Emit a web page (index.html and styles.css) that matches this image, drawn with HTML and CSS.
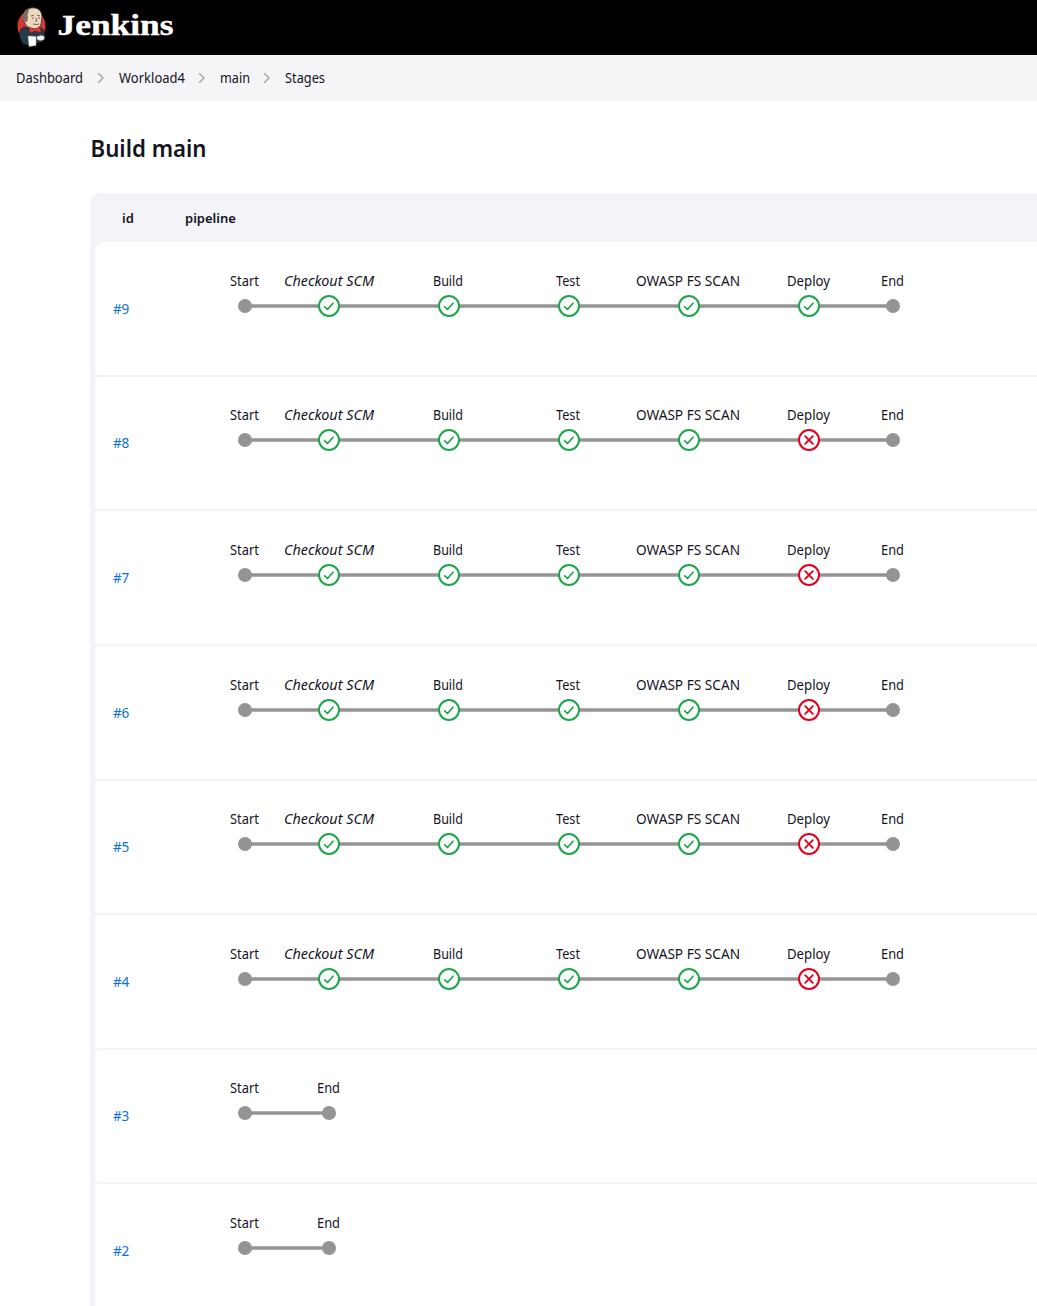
FILE: index.html
```
<!DOCTYPE html>
<html lang="en">
<head>
<meta charset="utf-8">
<title>Build main - Stages</title>
<link rel="stylesheet" href="styles.css">
</head>
<body>
<svg class="defs" aria-hidden="true">
  <defs>
    <g id="dot"><circle r="7" fill="#949494"/></g>
    <g id="ok"><circle r="10" fill="#fff" stroke="#1ea64b" stroke-width="2"/><path d="M-4.300 .8l2.800 2.700 5.500-6.300" fill="none" stroke="#1ea64b" stroke-width="1.700" stroke-linecap="round" stroke-linejoin="round"/></g>
    <g id="bad"><circle r="10" fill="#fff" stroke="#e6001f" stroke-width="2"/><path d="M-3.8-3.8l7.6 7.6M3.8-3.8l-7.6 7.6" fill="none" stroke="#e6001f" stroke-width="1.9" stroke-linecap="round"/></g>
    <g id="run"><path class="line" d="M60 64H708"/><use href="#dot" x="60" y="64"/><use href="#ok" x="144" y="64"/><use href="#ok" x="264" y="64"/><use href="#ok" x="384" y="64"/><use href="#ok" x="504" y="64"/><use href="#dot" x="708" y="64"/></g>
    <g id="empty"><path class="line" d="M60 64H144"/><use href="#dot" x="60" y="64"/><use href="#dot" x="144" y="64"/></g>
  </defs>
</svg>
<header class="header">
  <svg class="logo" width="180" height="55" viewBox="0 0 180 55">
    <ellipse cx="31.500" cy="26" rx="14" ry="15.500" fill="#d33833"/>
    <path d="M20 38c-1-5 0-9 4-11l6 2 8-2c5 1 7 4 7 9l-3 6-14 3-5-1z" fill="#26394a" stroke="#151515" stroke-width=".7"/>
    <path d="M24 22c-1-6-1-13 7-14 7-1 11 3 11 9l-1 7c-1 3-3 5-6 5-5 0-9-3-10-6z" fill="#efd7bd" stroke="#383030" stroke-width=".8"/>
    <path d="M25 22c-3-3-3-9 1-12l4-2c-2 4-3 7-2 10l-1 4z" fill="#77706a"/>
    <path d="M31 16l3-.8M37 15.500l3 .3M32 18h2M38 18h2M36 18l1 3-2 .3M33 24l4 .6 2-.8" stroke="#554438" stroke-width=".8" fill="none"/>
    <path d="M29 27l5 2 6-2 1 5.500-6-1.500-5 2z" fill="#e03a35" stroke="#681e1b" stroke-width=".4"/>
    <path d="M28 36l8 .5v9l-7 1z" fill="#fff" stroke="#aaa" stroke-width=".5"/>
    <path d="M37 36l5-1 3 2-1 3-4 1-4-2z" fill="#eee" stroke="#303030" stroke-width=".6"/>
    <text class="brand" x="57.500" y="34.500" textLength="116" lengthAdjust="spacingAndGlyphs">Jenkins</text>
  </svg>
</header>
<nav class="crumbs">
  <svg width="340" height="46" viewBox="0 0 340 46">
    <g class="label"><text x="16" y="28" textLength="67" lengthAdjust="spacingAndGlyphs">Dashboard</text><text x="119" y="28" textLength="66" lengthAdjust="spacingAndGlyphs">Workload4</text><text x="220" y="28" textLength="30" lengthAdjust="spacingAndGlyphs">main</text><text x="285" y="28" textLength="40" lengthAdjust="spacingAndGlyphs">Stages</text></g>
    <path d="M98.500 18.500l4.500 4.500-4.500 4.500M199.500 18.500l4.500 4.500-4.500 4.500M264.500 18.500l4.500 4.500-4.500 4.500" fill="none" stroke="#a9a9b8" stroke-width="1.600" stroke-linecap="round" stroke-linejoin="round"/>
  </svg>
</nav>
<main class="main">
  <h1 class="title"><svg width="130" height="40"><text x="0.500" y="27" textLength="116" lengthAdjust="spacingAndGlyphs">Build main</text></svg></h1>
  <section class="table">
    <div class="head"><span class="head-id">id</span><span>pipeline</span></div>
    <div class="row"><a class="id">#9</a><svg class="graph"><use href="#run"/><use href="#ok" x="624" y="64"/><g class="label"><text x="45" y="44" textLength="29" lengthAdjust="spacingAndGlyphs">Start</text><text class="scm" x="99" y="44" textLength="90" lengthAdjust="spacingAndGlyphs">Checkout SCM</text><text x="248" y="44" textLength="30" lengthAdjust="spacingAndGlyphs">Build</text><text x="371" y="44" textLength="24" lengthAdjust="spacingAndGlyphs">Test</text><text x="451" y="44" textLength="104" lengthAdjust="spacingAndGlyphs">OWASP FS SCAN</text><text x="602" y="44" textLength="43" lengthAdjust="spacingAndGlyphs">Deploy</text><text x="696" y="44" textLength="23" lengthAdjust="spacingAndGlyphs">End</text></g></svg></div>
    <div class="row"><a class="id">#8</a><svg class="graph"><use href="#run"/><use href="#bad" x="624" y="64"/><g class="label"><text x="45" y="44" textLength="29" lengthAdjust="spacingAndGlyphs">Start</text><text class="scm" x="99" y="44" textLength="90" lengthAdjust="spacingAndGlyphs">Checkout SCM</text><text x="248" y="44" textLength="30" lengthAdjust="spacingAndGlyphs">Build</text><text x="371" y="44" textLength="24" lengthAdjust="spacingAndGlyphs">Test</text><text x="451" y="44" textLength="104" lengthAdjust="spacingAndGlyphs">OWASP FS SCAN</text><text x="602" y="44" textLength="43" lengthAdjust="spacingAndGlyphs">Deploy</text><text x="696" y="44" textLength="23" lengthAdjust="spacingAndGlyphs">End</text></g></svg></div>
    <div class="row"><a class="id">#7</a><svg class="graph"><use href="#run"/><use href="#bad" x="624" y="64"/><g class="label"><text x="45" y="44" textLength="29" lengthAdjust="spacingAndGlyphs">Start</text><text class="scm" x="99" y="44" textLength="90" lengthAdjust="spacingAndGlyphs">Checkout SCM</text><text x="248" y="44" textLength="30" lengthAdjust="spacingAndGlyphs">Build</text><text x="371" y="44" textLength="24" lengthAdjust="spacingAndGlyphs">Test</text><text x="451" y="44" textLength="104" lengthAdjust="spacingAndGlyphs">OWASP FS SCAN</text><text x="602" y="44" textLength="43" lengthAdjust="spacingAndGlyphs">Deploy</text><text x="696" y="44" textLength="23" lengthAdjust="spacingAndGlyphs">End</text></g></svg></div>
    <div class="row"><a class="id">#6</a><svg class="graph"><use href="#run"/><use href="#bad" x="624" y="64"/><g class="label"><text x="45" y="44" textLength="29" lengthAdjust="spacingAndGlyphs">Start</text><text class="scm" x="99" y="44" textLength="90" lengthAdjust="spacingAndGlyphs">Checkout SCM</text><text x="248" y="44" textLength="30" lengthAdjust="spacingAndGlyphs">Build</text><text x="371" y="44" textLength="24" lengthAdjust="spacingAndGlyphs">Test</text><text x="451" y="44" textLength="104" lengthAdjust="spacingAndGlyphs">OWASP FS SCAN</text><text x="602" y="44" textLength="43" lengthAdjust="spacingAndGlyphs">Deploy</text><text x="696" y="44" textLength="23" lengthAdjust="spacingAndGlyphs">End</text></g></svg></div>
    <div class="row"><a class="id">#5</a><svg class="graph"><use href="#run"/><use href="#bad" x="624" y="64"/><g class="label"><text x="45" y="44" textLength="29" lengthAdjust="spacingAndGlyphs">Start</text><text class="scm" x="99" y="44" textLength="90" lengthAdjust="spacingAndGlyphs">Checkout SCM</text><text x="248" y="44" textLength="30" lengthAdjust="spacingAndGlyphs">Build</text><text x="371" y="44" textLength="24" lengthAdjust="spacingAndGlyphs">Test</text><text x="451" y="44" textLength="104" lengthAdjust="spacingAndGlyphs">OWASP FS SCAN</text><text x="602" y="44" textLength="43" lengthAdjust="spacingAndGlyphs">Deploy</text><text x="696" y="44" textLength="23" lengthAdjust="spacingAndGlyphs">End</text></g></svg></div>
    <div class="row"><a class="id">#4</a><svg class="graph"><use href="#run"/><use href="#bad" x="624" y="64"/><g class="label"><text x="45" y="44" textLength="29" lengthAdjust="spacingAndGlyphs">Start</text><text class="scm" x="99" y="44" textLength="90" lengthAdjust="spacingAndGlyphs">Checkout SCM</text><text x="248" y="44" textLength="30" lengthAdjust="spacingAndGlyphs">Build</text><text x="371" y="44" textLength="24" lengthAdjust="spacingAndGlyphs">Test</text><text x="451" y="44" textLength="104" lengthAdjust="spacingAndGlyphs">OWASP FS SCAN</text><text x="602" y="44" textLength="43" lengthAdjust="spacingAndGlyphs">Deploy</text><text x="696" y="44" textLength="23" lengthAdjust="spacingAndGlyphs">End</text></g></svg></div>
    <div class="row"><a class="id">#3</a><svg class="graph"><use href="#empty"/><g class="label"><text x="45" y="44" textLength="29" lengthAdjust="spacingAndGlyphs">Start</text><text x="132" y="44" textLength="23" lengthAdjust="spacingAndGlyphs">End</text></g></svg></div>
    <div class="row"><a class="id">#2</a><svg class="graph"><use href="#empty"/><g class="label"><text x="45" y="44" textLength="29" lengthAdjust="spacingAndGlyphs">Start</text><text x="132" y="44" textLength="23" lengthAdjust="spacingAndGlyphs">End</text></g></svg></div>
  </section>
</main>
</body>
</html>
```
FILE: styles.css
```
* { box-sizing: border-box; }
html, body { margin: 0; height: 1306px; overflow: hidden; }
body { background: #fff; color: #14141f; font-family: "Noto Sans", "Open Sans", sans-serif; font-size: 13.5px; }
svg { display: block; }
.defs { display: none; }
.header { height: 55px; background: #000; }
.brand { font: bold 28.5px "Liberation Serif", serif; fill: #fff; stroke: #fff; stroke-width: .4px; }
.crumbs { height: 46px; background: #f5f5f8; }
.label { font-size: 13.7px; fill: #14141f; }
.scm { font-style: italic; }
.main { padding: 29px 0 0 90px; }
.title { margin: 0; height: 63px; font-size: 23px; font-weight: 600; fill: #14141f; }
.table { background: #f3f3f8; border-radius: 10px 0 0 0; padding-left: 5px; }
.head { height: 49.2px; padding-top: 1.5px; display: flex; align-items: center; font-size: 13px; font-weight: 600; }
.head-id { width: 90px; padding-left: 27px; }
.row { height: 132.6px; margin-bottom: 2px; background: #fff; border-radius: 4px 0 0 4px; display: flex; }
.head + .row { border-top-left-radius: 10px; }
.id { width: 90px; padding: 56.55px 0 0 18px; color: #0b6fe0; line-height: 20px; letter-spacing: -.3px; }
.graph { width: 760px; height: 130px; flex: none; margin-top: -.45px; }
.line { stroke: #949494; stroke-width: 3.5; }
```
